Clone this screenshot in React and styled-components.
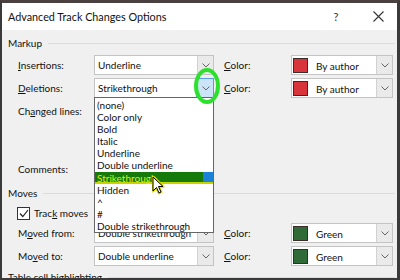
import React from "react";
import styled, { createGlobalStyle } from "styled-components";

const FONT = `Lato, "Noto Sans", "Liberation Sans", sans-serif`;

const Global = createGlobalStyle`
  html, body { margin: 0; padding: 0; background: #f0f0f0; }
  body { width: 400px; height: 280px; overflow: hidden; font-family: ${FONT}; }
`;

const Frame = styled.div`
  position: relative;
  box-sizing: border-box;
  width: 400px;
  height: 280px;
  overflow: hidden;
  background: #f0f0f0;
  border-left: 2px solid #3a3a3a;
  border-right: 3px solid #3a3a3a;
  border-top: 3px solid #4a4040;
  border-bottom: 2px solid #3a3a3a;
  font-family: ${FONT};
  font-size: 10px;
  line-height: 13px;
  color: #111;
`;

const TitleBar = styled.div`
  height: 27px;
  background: #fff;
  display: flex;
  align-items: center;
  padding-left: 6px;
  padding-right: 12px;
`;

const Title = styled.div`
  flex: 1;
  font-size: 10.8px;
  color: #111;
`;

const TitleBtn = styled.div`
  width: ${(p) => p.w}px;
  margin-left: ${(p) => p.ml || 0}px;
  display: flex;
  justify-content: center;
  align-items: center;
  color: #333;
  font-size: 11px;
`;

const Body = styled.div`
  padding: 6px 2px 0 6px;
`;

const GroupHead = styled.div`
  display: flex;
  align-items: center;
  height: 14px;
  gap: 6px;
  margin-top: ${(p) => p.mt || 0}px;
  white-space: nowrap;
  &::after {
    content: "";
    flex: 1;
    height: 1px;
    background: #dcdcdc;
  }
`;

const Row = styled.div`
  display: grid;
  grid-template-columns: 76px 120px 10px 67px 102px;
  align-items: center;
  height: 20px;
  padding-left: 10px;
  margin-top: ${(p) => p.mt || 0}px;
`;

const Label = styled.div`
  grid-column: ${(p) => p.col || 1};
  white-space: nowrap;
`;

const U = styled.span`
  text-decoration: underline;
  text-underline-offset: 1px;
`;

const Combo = styled.div`
  grid-column: ${(p) => p.col};
  box-sizing: border-box;
  height: 20px;
  background: #fff;
  border: 1px solid #c4c4c4;
  display: flex;
  align-items: center;
`;

const ComboText = styled.div`
  flex: 1;
  padding-left: ${(p) => p.pl || 3}px;
  padding-top: ${(p) => p.pt || 0}px;
  white-space: nowrap;
  overflow: hidden;
`;

const Drop = styled.div`
  box-sizing: border-box;
  width: 16px;
  height: 18px;
  display: flex;
  align-items: center;
  justify-content: center;
  background: ${(p) => (p.active ? "#cce4f7" : "#eaeaea")};
  border-left: 1px solid ${(p) => (p.active ? "#569de5" : "#d2d2d2")};
  outline: ${(p) => (p.active ? "1px solid #569de5" : "none")};
`;

const Swatch = styled.div`
  width: 13px;
  height: 13px;
  margin-left: 1px;
  background: ${(p) => p.c};
  border: 1px solid #3a2a2a;
`;

const CheckRow = styled.div`
  display: flex;
  align-items: center;
  gap: 4px;
  height: 18px;
  padding-left: 9px;
  margin-top: ${(p) => p.mt || 0}px;
`;

const CheckBox = styled.div`
  box-sizing: border-box;
  width: 13px;
  height: 13px;
  background: #fff;
  border: 1px solid #333;
  display: flex;
  align-items: center;
  justify-content: center;
`;

const List = styled.div`
  position: absolute;
  left: 92px;
  top: 94px;
  width: 120px;
  height: 136px;
  box-sizing: border-box;
  background: #fff;
  border: 1px solid #666;
  padding-top: 1px;
`;

const Item = styled.div`
  height: 12.1px;
  line-height: 12px;
  padding-left: 2px;
  margin-right: ${(p) => (p.sel ? 0 : 1)}px;
  white-space: nowrap;
  color: ${(p) => (p.sel ? "#d8ef1a" : "#111")};
  background: ${(p) =>
    p.sel ? "linear-gradient(90deg, #157a0a 0, #157a0a 108px, #1c82d8 108px)" : "transparent"};
  box-shadow: ${(p) => (p.sel ? "inset 0 -2px 0 #c8d400" : "none")};
`;

const Ring = styled.div`
  position: absolute;
  left: 192px;
  top: 65px;
  width: 18px;
  height: 28px;
  border: 4px solid #2ee02e;
  border-radius: 50%;
`;

const Cursor = styled.svg`
  position: absolute;
  left: 150px;
  top: 173px;
`;

const Chevron = () => (
  <svg width="8" height="5" viewBox="0 0 8 5">
    <path d="M0.5 0.5 L4 4 L7.5 0.5" fill="none" stroke="#666" strokeWidth="1" />
  </svg>
);

const ColorCombo = ({ c, text }) => (
  <Combo col={5}>
    <Swatch c={c} />
    <ComboText pl={8} pt={2}>{text}</ComboText>
    <Drop>
      <Chevron />
    </Drop>
  </Combo>
);

const items = [
  "(none)",
  "Color only",
  "Bold",
  "Italic",
  "Underline",
  "Double underline",
  "Strikethrough",
  "Hidden",
  "^",
  "#",
  "Double strikethrough",
];

export default function App() {
  return (
    <>
      <Global />
      <Frame>
        <TitleBar>
          <Title>Advanced Track Changes Options</Title>
          <TitleBtn w={14}>?</TitleBtn>
          <TitleBtn w={14} ml={28}>
            <svg width="11" height="11" viewBox="0 0 11 11">
              <path d="M0.5 0.5 L10.5 10.5 M10.5 0.5 L0.5 10.5" stroke="#333" strokeWidth="1.1" />
            </svg>
          </TitleBtn>
        </TitleBar>
        <Body>
          <GroupHead>Markup</GroupHead>
          <Row mt={5}>
            <Label>
              <U>I</U>nsertions:
            </Label>
            <Combo col={2}>
              <ComboText>Underline</ComboText>
              <Drop>
                <Chevron />
              </Drop>
            </Combo>
            <Label col={4}>
              <U>C</U>olor:
            </Label>
            <ColorCombo c="#d7343c" text="By author" />
          </Row>
          <Row mt={3}>
            <Label>
              <U>D</U>eletions:
            </Label>
            <Combo col={2}>
              <ComboText>Strikethrough</ComboText>
              <Drop active>
                <Chevron />
              </Drop>
            </Combo>
            <Label col={4}>
              <U>C</U>olor:
            </Label>
            <ColorCombo c="#d7343c" text="By author" />
          </Row>
          <Row mt={3}>
            <Label>
              Ch<U>a</U>nged lines:
            </Label>
          </Row>
          <Row mt={38}>
            <Label>Comments:</Label>
          </Row>
          <GroupHead mt={7}>Moves</GroupHead>
          <CheckRow mt={4}>
            <CheckBox>
              <svg width="10" height="9" viewBox="0 0 10 9">
                <path d="M1 4.5 L3.8 7.5 L9 1" fill="none" stroke="#222" strokeWidth="1.2" />
              </svg>
            </CheckBox>
            <span>
              Trac<U>k</U> moves
            </span>
          </CheckRow>
          <Row mt={1}>
            <Label>
              M<U>o</U>ved from:
            </Label>
            <Combo col={2}>
              <ComboText>Double strikethrough</ComboText>
              <Drop>
                <Chevron />
              </Drop>
            </Combo>
            <Label col={4}>
              <U>C</U>olor:
            </Label>
            <ColorCombo c="#2f6a37" text="Green" />
          </Row>
          <Row mt={3}>
            <Label>
              Mo<U>v</U>ed to:
            </Label>
            <Combo col={2}>
              <ComboText>Double underline</ComboText>
              <Drop>
                <Chevron />
              </Drop>
            </Combo>
            <Label col={4}>
              <U>C</U>olor:
            </Label>
            <ColorCombo c="#2f6a37" text="Green" />
          </Row>
          <GroupHead mt={4}>Table cell highlighting</GroupHead>
        </Body>
        <List>
          {items.map((t) => (
            <Item key={t} sel={t === "Strikethrough"}>
              {t}
            </Item>
          ))}
        </List>
        <Ring />
        <Cursor width="14" height="20" viewBox="0 0 14 20">
          <path
            d="M1 1 L1 15 L4.5 11.5 L7 17 L9 16 L6.5 10.5 L11 10.5 Z"
            fill="#fff"
            stroke="#e8e000"
            strokeWidth="3"
            strokeLinejoin="round"
          />
          <path
            d="M1 1 L1 15 L4.5 11.5 L7 17 L9 16 L6.5 10.5 L11 10.5 Z"
            fill="#fff"
            stroke="#000"
            strokeWidth="1"
            strokeLinejoin="round"
          />
        </Cursor>
      </Frame>
    </>
  );
}
